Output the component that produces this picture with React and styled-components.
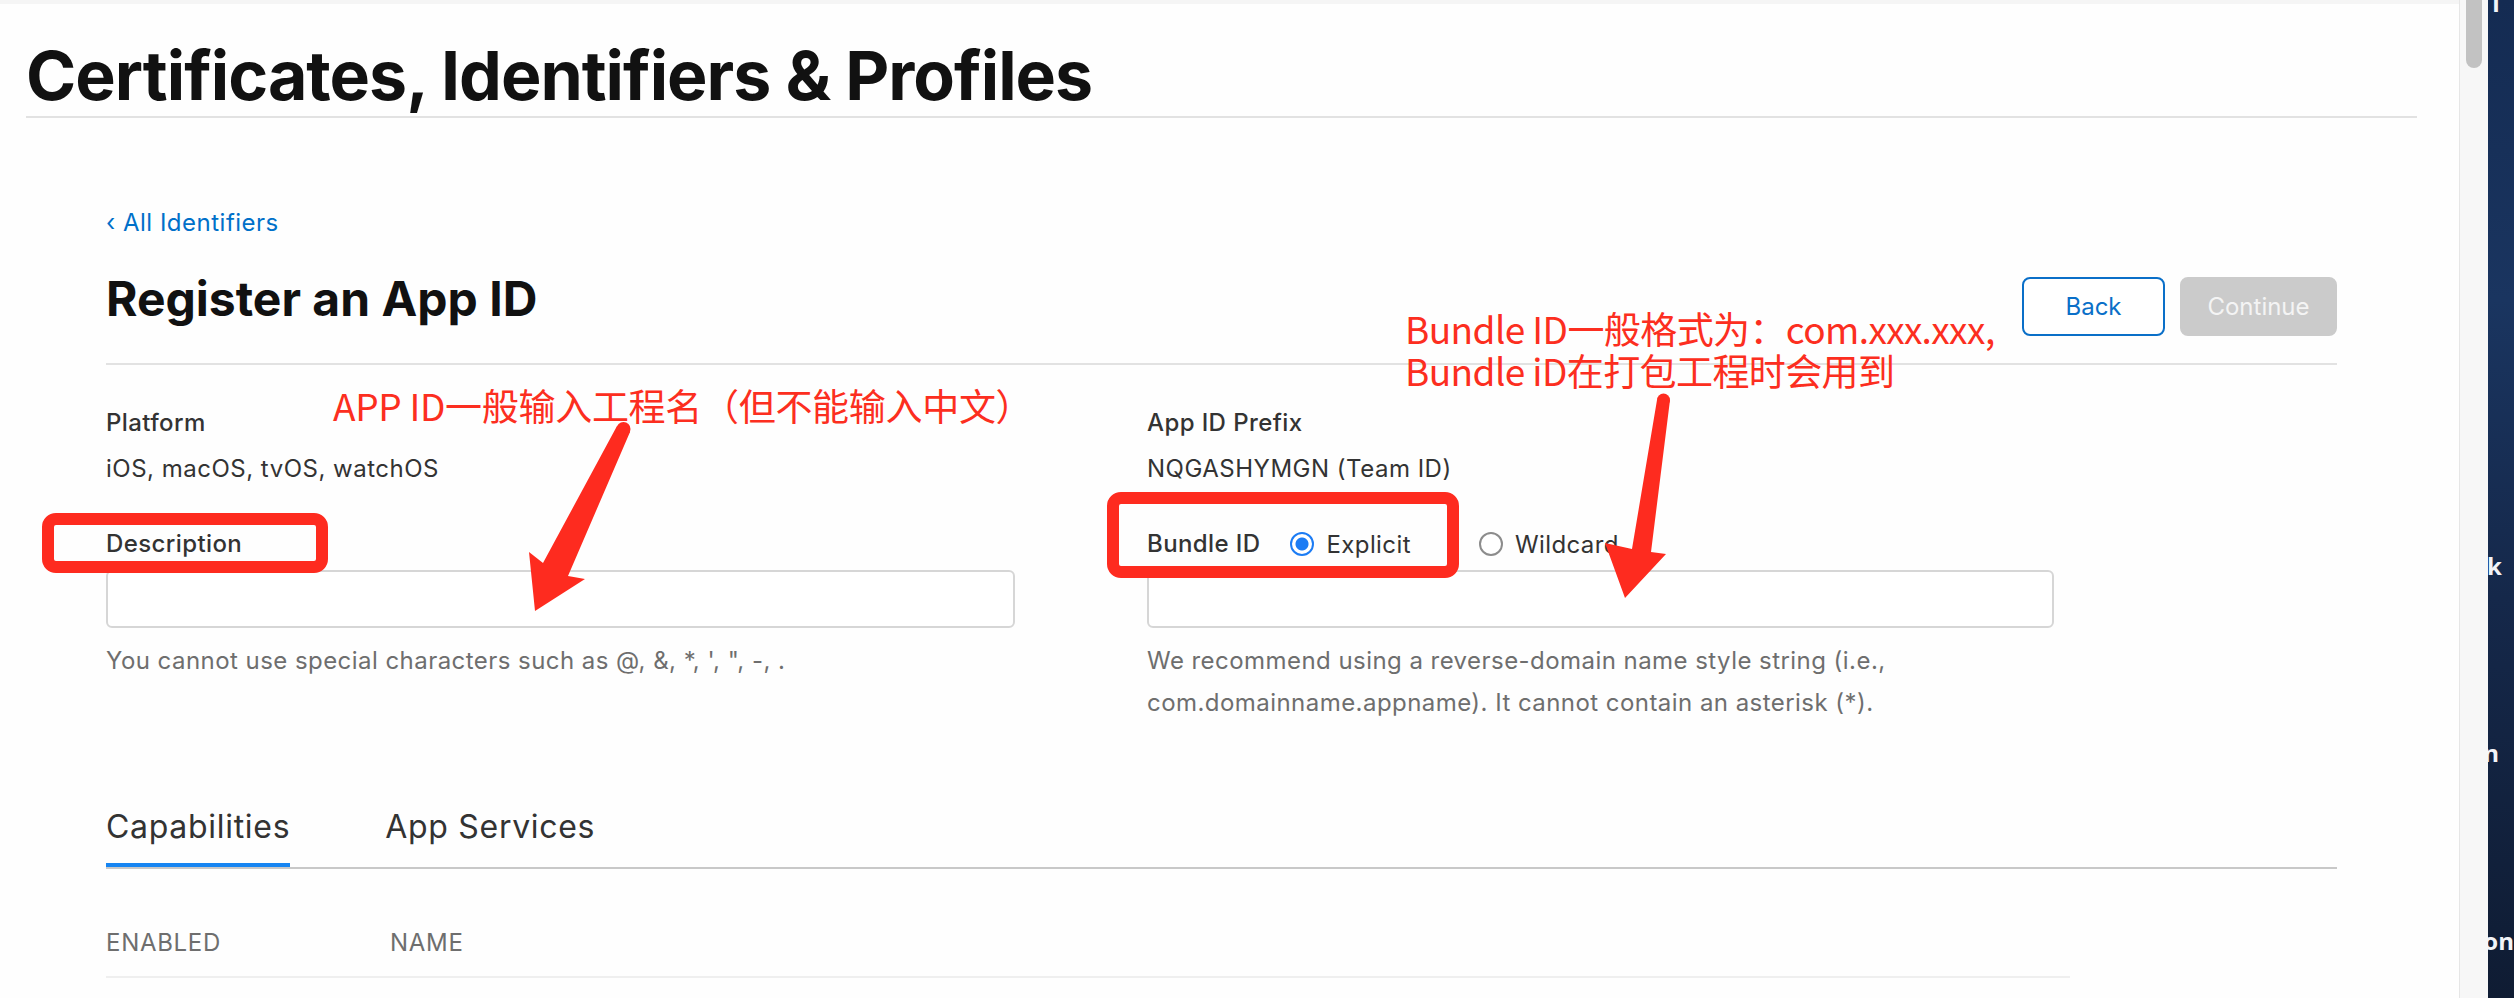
import React from 'react';
import styled, { createGlobalStyle } from 'styled-components';

const GlobalStyle = createGlobalStyle`
  html, body {
    margin: 0;
    padding: 0;
  }
  body {
    font-family: Inter, 'Noto Sans', sans-serif;
    background: #fefefe;
    overflow: hidden;
  }
  * {
    box-sizing: border-box;
  }
`;

const Screen = styled.div`
  display: flex;
  width: 2514px;
  height: 998px;
  overflow: hidden;
`;

const Main = styled.main`
  position: relative;
  flex: 1;
  background: #fefefe;
  border-top: 4px solid #f5f5f5;
  color: #333;
`;

const Header = styled.header`
  margin: 0 42px 0 26px;
  padding: 31px 0 1px;
  border-bottom: 2px solid #e2e2e2;
`;

const PageTitle = styled.h1`
  margin: 0;
  font-size: 68px;
  line-height: 80px;
  font-weight: 700;
  color: #111;
  letter-spacing: -1px;
`;

const Content = styled.section`
  padding: 0 122px 0 106px;
`;

const BackLink = styled.a`
  display: inline-block;
  margin-top: 90px;
  font-size: 24px;
  line-height: 30px;
  letter-spacing: 0.5px;
  color: #0070c9;
  text-decoration: none;
`;

const TitleRow = styled.div`
  display: flex;
  justify-content: space-between;
  align-items: flex-start;
  margin-top: 33px;
  padding-bottom: 27px;
  border-bottom: 2px solid #e2e2e2;
`;

const SectionTitle = styled.h2`
  margin: 0;
  font-size: 48px;
  line-height: 56px;
  font-weight: 700;
  color: #111;
`;

const Actions = styled.div`
  display: flex;
  gap: 15px;
  margin-top: 6px;
`;

const Button = styled.button`
  height: 59px;
  padding: 0;
  width: ${(p) => (p.primary ? '157px' : '143px')};
  border-radius: 8px;
  font-family: inherit;
  font-size: 24px;
  border: 2px solid ${(p) => (p.primary ? '#cbcbcb' : '#0a6fc8')};
  background: ${(p) => (p.primary ? '#cbcbcb' : '#fff')};
  color: ${(p) => (p.primary ? '#f4f4f4' : '#0a6fc8')};
`;

const FormGrid = styled.div`
  display: grid;
  grid-template-columns: 909px 907px;
  column-gap: 132px;
  padding-top: 44px;
`;

const Field = styled.div`
  display: flex;
  flex-direction: column;
`;

const Label = styled.div`
  font-size: 24px;
  line-height: 28px;
  font-weight: 500;
  letter-spacing: 0.4px;
  color: #333;
`;

const Value = styled.div`
  margin-top: 18px;
  font-size: 24px;
  line-height: 28px;
  letter-spacing: 0.5px;
  color: #333;
`;

const LabelRow = styled.div`
  display: flex;
  align-items: center;
  margin-top: 47px;
  height: 28px;
`;

const RadioOption = styled.label`
  display: flex;
  align-items: center;
  gap: 12px;
  margin-left: ${(p) => p.offset}px;
  font-size: 24px;
  letter-spacing: 0.4px;
  color: #333;
`;

const RadioDot = styled.span`
  width: 24px;
  height: 24px;
  border-radius: 50%;
  border: 2px solid ${(p) => (p.checked ? '#1c7cf4' : '#8c8c8c')};
  background: ${(p) =>
    p.checked
      ? 'radial-gradient(circle, #1c7cf4 0 6px, #fff 7px)'
      : '#fff'};
`;

const TextInput = styled.div`
  margin-top: 12px;
  height: 58px;
  border: 2px solid #d6d6d6;
  border-radius: 6px;
  background: #fff;
`;

const Help = styled.p`
  margin: 12px 0 0;
  font-size: 24px;
  line-height: 42px;
  letter-spacing: 0.45px;
  color: #6e6e6e;
  max-width: ${(p) => (p.narrow ? '800px' : 'none')};
`;

const Tabs = styled.div`
  display: flex;
  gap: 95px;
  margin-top: 83px;
  border-bottom: 2px solid #c8c8c8;
`;

const Tab = styled.div`
  font-size: 32px;
  line-height: 40px;
  letter-spacing: 0.7px;
  padding-bottom: 16px;
  color: #333;
  border-bottom: 4px solid ${(p) => (p.active ? '#1685f2' : 'transparent')};
`;

const TableHead = styled.div`
  display: grid;
  grid-template-columns: 284px 1fr;
  width: 1964px;
  margin-top: 60px;
  padding-bottom: 19px;
  border-bottom: 2px solid #efefef;
`;

const HeadCell = styled.div`
  font-size: 24px;
  line-height: 28px;
  letter-spacing: 0.7px;
  color: #6e6e6e;
  text-transform: uppercase;
`;

/* annotations drawn over the page */
const Markup = styled.div`
  position: absolute;
  inset: -4px 0 0 0;
  pointer-events: none;
`;

const RedBox = styled.div`
  position: absolute;
  left: ${(p) => p.x}px;
  top: ${(p) => p.y}px;
  width: ${(p) => p.w}px;
  height: ${(p) => p.h}px;
  border: 12px solid #fe2b1f;
  border-radius: 14px;
`;

const Note = styled.div`
  position: absolute;
  left: ${(p) => p.x}px;
  top: ${(p) => p.y}px;
  font-family: 'Noto Sans CJK SC', 'Noto Sans', sans-serif;
  font-size: 37px;
  line-height: 42px;
  letter-spacing: ${(p) => p.track || 0}px;
  color: #fc2e20;
  white-space: nowrap;
`;

const ArrowSvg = styled.svg`
  position: absolute;
  left: 0;
  top: 0;
`;

const ScrollTrack = styled.div`
  width: 29px;
  background: #f7f7f7;
  border-left: 1px solid #e6e6e6;
  padding-left: 6px;
`;

const ScrollThumb = styled.div`
  width: 16px;
  height: 76px;
  margin-top: -8px;
  border-radius: 8px;
  background: #c2c2c2;
`;

const Desktop = styled.div`
  position: relative;
  width: 26px;
  background: linear-gradient(180deg, #142b52 0%, #1a3560 30%, #15284a 60%, #0f1c33 100%);
  overflow: hidden;
`;

const DeskLabel = styled.div`
  position: absolute;
  right: ${(p) => p.r}px;
  top: ${(p) => p.y}px;
  font-family: 'Open Sans', sans-serif;
  font-weight: 700;
  font-size: 24px;
  color: #f2f4f8;
  white-space: nowrap;
`;

const App = () => {
  return (
    <Screen>
      <GlobalStyle />
      <Main>
        <Header>
          <PageTitle>Certificates, Identifiers &amp; Profiles</PageTitle>
        </Header>

        <Content>
          <BackLink href="#">‹ All Identifiers</BackLink>

          <TitleRow>
            <SectionTitle>Register an App ID</SectionTitle>
            <Actions>
              <Button>Back</Button>
              <Button primary>Continue</Button>
            </Actions>
          </TitleRow>

          <FormGrid>
            <Field>
              <Label>Platform</Label>
              <Value>iOS, macOS, tvOS, watchOS</Value>
              <LabelRow>
                <Label>Description</Label>
              </LabelRow>
              <TextInput />
              <Help>You cannot use special characters such as @, &amp;, *, ', ", -, .</Help>
            </Field>

            <Field>
              <Label>App ID Prefix</Label>
              <Value>NQGASHYMGN (Team ID)</Value>
              <LabelRow>
                <Label>Bundle ID</Label>
                <RadioOption offset={30}>
                  <RadioDot checked />
                  Explicit
                </RadioOption>
                <RadioOption offset={68}>
                  <RadioDot />
                  Wildcard
                </RadioOption>
              </LabelRow>
              <TextInput />
              <Help narrow>
                We recommend using a reverse-domain name style string (i.e.,
                com.domainname.appname). It cannot contain an asterisk (*).
              </Help>
            </Field>
          </FormGrid>

          <Tabs>
            <Tab active>Capabilities</Tab>
            <Tab>App Services</Tab>
          </Tabs>

          <TableHead>
            <HeadCell>Enabled</HeadCell>
            <HeadCell>Name</HeadCell>
          </TableHead>
        </Content>

        <Markup>
          <RedBox x={42} y={513} w={286} h={60} />
          <RedBox x={1107} y={492} w={352} h={86} />
          <Note x={333} y={384} track={-0.3}>APP ID一般输入工程名（但不能输入中文）</Note>
          <Note x={1405} y={307} track={-0.6}>
            Bundle ID一般格式为：com.xxx.xxx,
            <br />
            Bundle iD在打包工程时会用到
          </Note>
          <ArrowSvg width="2459" height="998" viewBox="0 0 2459 998">
            <g fill="#fe2b1f">
              <path d="M617 426 L543 563 L529 552 L535 611 L585 579 L568 576 L630 432 Z" />
              <circle cx="623.5" cy="429" r="7" />
              <path d="M1657 400 L1632 549 L1605 543 L1625 598 L1666 554 L1651 552 L1670 400 Z" />
              <circle cx="1663.5" cy="400" r="6.5" />
            </g>
          </ArrowSvg>
        </Markup>
      </Main>

      <ScrollTrack>
        <ScrollThumb />
      </ScrollTrack>

      <Desktop>
        <DeskLabel r={14} y={-14}>I</DeskLabel>
        <DeskLabel r={12} y={549}>Desk</DeskLabel>
        <DeskLabel r={15} y={736}>Design</DeskLabel>
        <DeskLabel r={0} y={924}>Location</DeskLabel>
      </Desktop>
    </Screen>
  );
};

export default App;
